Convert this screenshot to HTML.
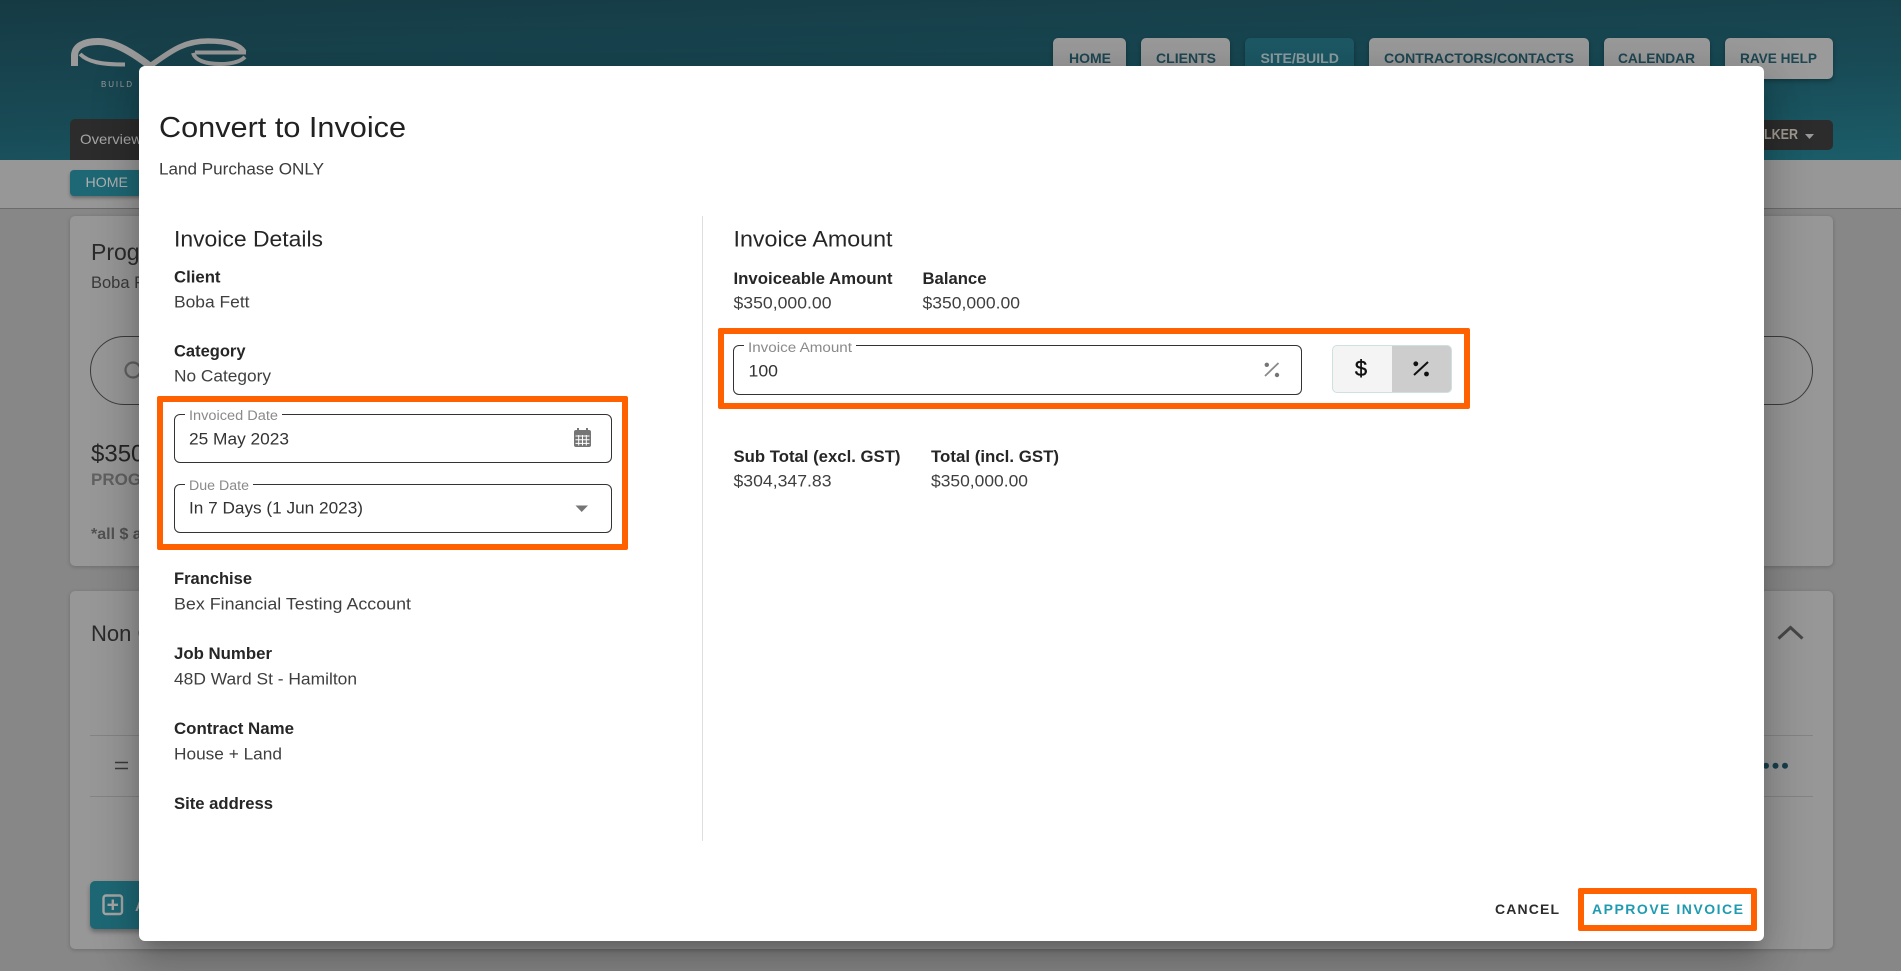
<!DOCTYPE html>
<html lang="en"><head><meta charset="utf-8"><title>Convert to Invoice</title>
<style>
html,body{margin:0;padding:0;width:1901px;height:971px;overflow:hidden;background:#878787;font-family:"Liberation Sans",Arial,sans-serif}
.a{position:absolute;box-sizing:border-box}
svg{position:absolute;left:0;top:0}
svg text{font-family:"Liberation Sans",Arial,sans-serif}
.tab{background:#9a9a9a;top:38px;height:41px;border-radius:5px;box-shadow:0 2px 4px rgba(0,0,0,.3)}
.card{background:#979797;border-radius:5px;box-shadow:0 1px 4px rgba(0,0,0,.2)}
.or{border:6.500px solid #ff6000;border-radius:2px}
.in{border:1.2px solid #333;border-radius:6px;background:#fff}
.gap{background:#fff;height:3px}
</style></head><body>
<div class="a" style="left:0;top:0;width:1901px;height:160px;background:linear-gradient(178deg,#163a44 0%,#184a55 55%,#1b5d69 100%)"></div>
<div class="a" style="left:0;top:160px;width:1901px;height:48px;background:#979797"></div>
<div class="a" style="left:0;top:208px;width:1901px;height:1px;background:#6c6c6c"></div>

<div class="a tab" style="left:1053px;width:73px"></div>
<div class="a tab" style="left:1141px;width:89px"></div>
<div class="a tab" style="left:1245px;width:109px;background:#1c5864"></div>
<div class="a tab" style="left:1369px;width:220px"></div>
<div class="a tab" style="left:1604px;width:106px"></div>
<div class="a tab" style="left:1725px;width:108px"></div>
<div class="a" style="left:70px;top:119px;width:100px;height:41px;background:#2c2c2c;border-radius:5px 5px 0 0"></div>
<div class="a" style="left:1700px;top:120px;width:133px;height:30px;background:#2c2c2c;border-radius:5px"></div>
<div class="a" style="left:70px;top:170px;width:110px;height:26px;background:#1e6875;border-radius:4px;box-shadow:0 2px 3px rgba(0,0,0,.3)"></div>

<div class="a card" style="left:70px;top:216px;width:1763px;height:350px"></div>
<div class="a card" style="left:70px;top:591px;width:1763px;height:358px"></div>
<div class="a" style="left:90px;top:336px;width:1723px;height:69px;border:1.2px solid #3c3c3c;border-radius:35px"></div>
<div class="a" style="left:90px;top:735px;width:1723px;height:1px;background:#848484"></div>
<div class="a" style="left:90px;top:796px;width:1723px;height:1px;background:#848484"></div>
<div class="a" style="left:90px;top:881px;width:120px;height:48px;background:#1e6875;border-radius:5px;box-shadow:0 3px 5px rgba(0,0,0,.3)"></div>

<svg width="1901" height="971" viewBox="0 0 1901 971">
  <!-- logo -->
  <g fill="none" stroke="#9a9a9a">
    <path d="M74.500 66 V56 C74.500 46 84 41.500 98 41.500 C115 41.500 133 53 150 66" stroke-width="7"/>
    <path d="M80 54 C88 62 101 64.500 125 64.500" stroke-width="4"/>
    <path d="M150 66 C170 52 183 41 208 41 C228 41 240 45 244 52" stroke-width="5.500"/>
    <path d="M195 52.500 H246" stroke-width="4"/>
    <path d="M193 53 C195 60 205 64 220 64 C232 64 240 62 245 57" stroke-width="4"/>
  </g>
  <text x="101" y="87" font-size="8" fill="#9a9a9a" letter-spacing="1" textLength="32">BUILD</text>

  <g font-size="14" font-weight="700" fill="#1e4752">
    <text x="1069" y="63" textLength="42" lengthAdjust="spacingAndGlyphs">HOME</text>
    <text x="1156" y="63" textLength="60" lengthAdjust="spacingAndGlyphs">CLIENTS</text>
    <text x="1260.500" y="63" textLength="78.500" lengthAdjust="spacingAndGlyphs" fill="#8d9ea2">SITE/BUILD</text>
    <text x="1384" y="63" textLength="190" lengthAdjust="spacingAndGlyphs">CONTRACTORS/CONTACTS</text>
    <text x="1618" y="63" textLength="77" lengthAdjust="spacingAndGlyphs">CALENDAR</text>
    <text x="1740" y="63" textLength="77" lengthAdjust="spacingAndGlyphs">RAVE HELP</text>
  </g>
  <text x="80" y="144" font-size="14" fill="#a6a6a6" textLength="62" lengthAdjust="spacingAndGlyphs">Overview</text>
  <text x="1764" y="139" font-size="15" font-weight="700" fill="#a09a90" textLength="34" lengthAdjust="spacingAndGlyphs">LKER</text>
  <path d="M1805 134 L1814 134 L1809.500 139 Z" fill="#9a9a9a"/>
  <text x="85.500" y="187" font-size="14" fill="#b0b0b0" textLength="42.500" lengthAdjust="spacingAndGlyphs">HOME</text>

  <text x="91" y="260" font-size="23" fill="#2b2b2b">Progress</text>
  <text x="91" y="288" font-size="16.500" fill="#3a3a3a">Boba Fett</text>
  <circle cx="133" cy="370" r="7.500" fill="none" stroke="#616161" stroke-width="2.200"/>
  <text x="91" y="461.500" font-size="24" fill="#252525">$350,000</text>
  <text x="91" y="485" font-size="17" font-weight="700" fill="#616161">PROGRESS</text>
  <text x="91" y="539" font-size="16" font-weight="700" fill="#525252">*all $ are</text>
  <text x="91" y="641" font-size="22" fill="#2b2b2b">Non Contract</text>
  <path d="M115 762.500 H128 M115 768.500 H128" stroke="#3a3a3a" stroke-width="1.600"/>
  <rect x="103.500" y="895.500" width="18.500" height="18.500" rx="2.500" fill="none" stroke="#a5a5a5" stroke-width="2.400"/>
  <path d="M112.800 899.500 V910 M107.500 904.800 H118" stroke="#a5a5a5" stroke-width="2.400"/>
  <text x="135" y="911" font-size="15" font-weight="700" fill="#a5a5a5">ADD</text>
  <path d="M1778.500 638.500 L1790.500 627.500 L1802.500 638.500" fill="none" stroke="#474747" stroke-width="3"/>
  <g fill="#173f4b"><circle cx="1766" cy="765.700" r="3"/><circle cx="1775.500" cy="765.700" r="3"/><circle cx="1785" cy="765.700" r="3"/></g>
</svg>

<!-- modal -->
<div class="a" style="left:139px;top:66px;width:1625px;height:875px;background:#fff;border-radius:6px;box-shadow:0 11px 15px -7px rgba(0,0,0,.2),0 24px 38px 3px rgba(0,0,0,.14),0 9px 46px 8px rgba(0,0,0,.12)"></div>
<div class="a" style="left:702px;top:216px;width:1px;height:625px;background:#dedede"></div>

<div class="a or" style="left:157px;top:396px;width:471px;height:154px"></div>
<div class="a or" style="left:718px;top:328px;width:752px;height:81px"></div>
<div class="a or" style="left:1578px;top:888px;width:179px;height:43px"></div>

<div class="a in" style="left:174px;top:414px;width:438px;height:49px"></div>
<div class="a gap" style="left:185px;top:413px;width:97px"></div>
<div class="a in" style="left:174px;top:484px;width:438px;height:49px"></div>
<div class="a gap" style="left:185px;top:483px;width:68px"></div>
<div class="a in" style="left:733px;top:345px;width:569px;height:50px"></div>
<div class="a gap" style="left:744px;top:344px;width:112px"></div>
<div class="a" style="left:1332px;top:345px;width:120px;height:48px;border:1px solid #cfe0e0;border-radius:5px;background:linear-gradient(90deg,#f4f4f4 0,#f4f4f4 50%,#cdcdcd 50%,#cdcdcd 100%)"></div>

<svg width="1901" height="971" viewBox="0 0 1901 971">
  <text x="159" y="137" font-size="28.500" fill="#212121" textLength="247" lengthAdjust="spacingAndGlyphs">Convert to Invoice</text>
  <text x="159" y="174.500" font-size="16.500" fill="#3c3c3c" textLength="165" lengthAdjust="spacingAndGlyphs">Land Purchase ONLY</text>
  <text x="174" y="246.500" font-size="22" fill="#262626" textLength="149" lengthAdjust="spacingAndGlyphs">Invoice Details</text>
  <g font-size="16.500" font-weight="700" fill="#262626">
    <text x="174" y="282.500" textLength="46.500" lengthAdjust="spacingAndGlyphs">Client</text>
    <text x="174" y="356.500" textLength="71.500" lengthAdjust="spacingAndGlyphs">Category</text>
    <text x="174" y="584" textLength="78" lengthAdjust="spacingAndGlyphs">Franchise</text>
    <text x="174" y="659" textLength="98" lengthAdjust="spacingAndGlyphs">Job Number</text>
    <text x="174" y="734" textLength="120" lengthAdjust="spacingAndGlyphs">Contract Name</text>
    <text x="174" y="809" textLength="99" lengthAdjust="spacingAndGlyphs">Site address</text>
    <text x="733.500" y="284" textLength="159" lengthAdjust="spacingAndGlyphs">Invoiceable Amount</text>
    <text x="922.500" y="284" textLength="64" lengthAdjust="spacingAndGlyphs">Balance</text>
    <text x="733.500" y="462" textLength="167" lengthAdjust="spacingAndGlyphs">Sub Total (excl. GST)</text>
    <text x="931" y="462" textLength="128" lengthAdjust="spacingAndGlyphs">Total (incl. GST)</text>
  </g>
  <g font-size="16.500" fill="#3f3f3f">
    <text x="174" y="307.500" textLength="75.500" lengthAdjust="spacingAndGlyphs">Boba Fett</text>
    <text x="174" y="381.500" textLength="97" lengthAdjust="spacingAndGlyphs">No Category</text>
    <text x="174" y="609.500" textLength="237" lengthAdjust="spacingAndGlyphs">Bex Financial Testing Account</text>
    <text x="174" y="684.500" textLength="183" lengthAdjust="spacingAndGlyphs">48D Ward St - Hamilton</text>
    <text x="174" y="759.500" textLength="108" lengthAdjust="spacingAndGlyphs">House + Land</text>
    <text x="733.500" y="308.500" textLength="98" lengthAdjust="spacingAndGlyphs">$350,000.00</text>
    <text x="922.500" y="308.500" textLength="97.500" lengthAdjust="spacingAndGlyphs">$350,000.00</text>
    <text x="733.500" y="486.500" textLength="98" lengthAdjust="spacingAndGlyphs">$304,347.83</text>
    <text x="931" y="486.500" textLength="97" lengthAdjust="spacingAndGlyphs">$350,000.00</text>
    <text x="189" y="444.500" fill="#333" textLength="100" lengthAdjust="spacingAndGlyphs">25 May 2023</text>
    <text x="189" y="513.500" fill="#333" textLength="174" lengthAdjust="spacingAndGlyphs">In 7 Days (1 Jun 2023)</text>
    <text x="748.500" y="376.500" fill="#333" textLength="29.500" lengthAdjust="spacingAndGlyphs">100</text>
  </g>
  <text x="733.500" y="246.500" font-size="22" fill="#262626" textLength="159" lengthAdjust="spacingAndGlyphs">Invoice Amount</text>
  <g font-size="13.500" fill="#8a8a8a">
    <text x="189" y="420" textLength="89" lengthAdjust="spacingAndGlyphs">Invoiced Date</text>
    <text x="189" y="490" textLength="60" lengthAdjust="spacingAndGlyphs">Due Date</text>
    <text x="748" y="352" textLength="104" lengthAdjust="spacingAndGlyphs">Invoice Amount</text>
  </g>
  <g font-size="14" font-weight="700">
    <text x="1495" y="914" fill="#2c2c2c" textLength="64">CANCEL</text>
    <text x="1592" y="914" fill="#1f9bb1" textLength="151">APPROVE INVOICE</text>
  </g>
  <!-- calendar -->
  <g transform="translate(2 0)">
    <rect x="572" y="430" width="17" height="17" rx="2" fill="#757575"/>
    <rect x="575" y="428" width="2" height="3.500" fill="#757575"/><rect x="584" y="428" width="2" height="3.500" fill="#757575"/>
    <path d="M573.500 436 H587.500 M573.500 439.800 H587.500 M573.500 443.400 H587.500 M576.700 435 V445.500 M580.500 435 V445.500 M584.300 435 V445.500" stroke="#fff" stroke-width="1" fill="none"/>
  </g>
  <path d="M575.500 505.500 H588 L581.700 512 Z" fill="#757575"/>
  <!-- percents -->
  <g fill="#757575"><path d="M1265 376 L1278.500 363" stroke="#8a8a8a" stroke-width="1.800"/><circle cx="1266.800" cy="364.800" r="2.200"/><circle cx="1277" cy="375" r="2.200"/></g>
  <g fill="#111"><path d="M1414 375 L1428 362" stroke="#111" stroke-width="2"/><circle cx="1415.800" cy="363.800" r="2.400"/><circle cx="1426.500" cy="374" r="2.400"/></g>
  <text x="1361" y="376" font-size="22" fill="#111" text-anchor="middle" stroke="#111" stroke-width=".4">$</text>
</svg>
</body></html>
